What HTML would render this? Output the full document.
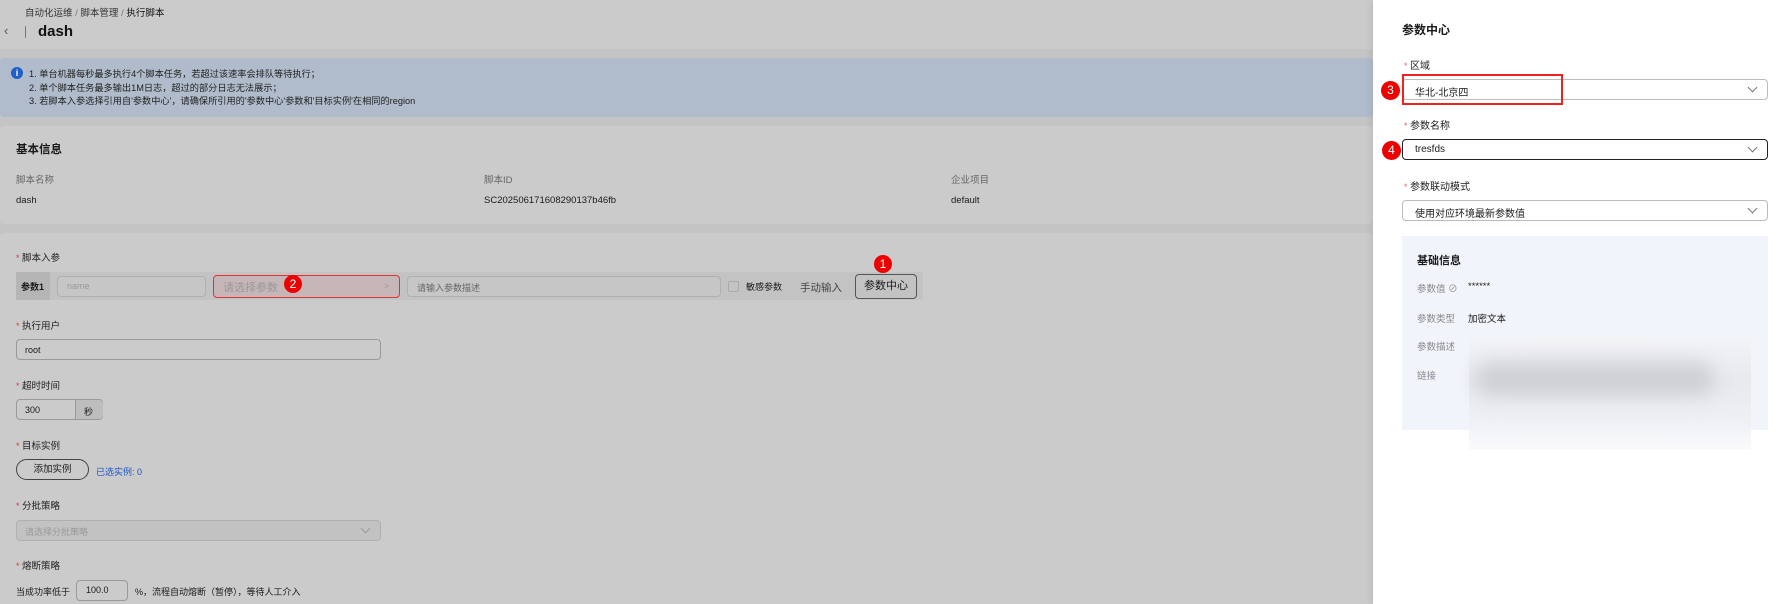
<!DOCTYPE html>
<html><head><meta charset="utf-8"><style>
*{margin:0;padding:0;box-sizing:border-box}
html,body{width:1778px;height:604px;overflow:hidden}
body{background:#c4c4c4;font-family:"Liberation Sans","Noto Sans CJK SC",sans-serif;font-size:9.5px;color:#1a1a1a;position:relative}
.a{position:absolute;white-space:nowrap}
.box{position:absolute}
.lbl{position:absolute;font-size:9.5px;color:#222;white-space:nowrap}
.lbl:before{content:"* ";color:#c44;font-size:9px}
.in{position:absolute;border:1px solid #9a9a9a;border-radius:4px;background:#cbcbcb}
.chev{position:absolute;width:7px;height:7px;border-right:1px solid #777;border-bottom:1px solid #777;transform:rotate(45deg)}
.badge{position:absolute;width:18px;height:18px;border-radius:50%;background:#e00;color:#fff;font-size:12px;text-align:center;line-height:18px}
.pl{position:absolute;font-size:10px;color:#222;white-space:nowrap}
.pl:before{content:"* ";color:#d66;font-size:9px}
.ps{position:absolute;left:1402px;width:366px;height:21px;border:1px solid #bbb;border-radius:4px;background:#fff;font-size:10px;padding:4px 0 0 12px;white-space:nowrap}
</style></head><body>
<div class="box" style="left:0;top:0;width:1373px;height:49px;background:#cbcbcb"></div>
<div class="a" style="left:25px;top:5px;font-size:9.5px;color:#333">自动化运维 <span style="color:#777">/</span> 脚本管理 <span style="color:#777">/</span> <span style="color:#111">执行脚本</span></div>
<div class="a" style="left:4px;top:23px;font-size:13px;color:#555">&lsaquo;</div>
<div class="box" style="left:25px;top:26px;width:1px;height:12px;background:#777"></div>
<div class="a" style="left:38px;top:23px;font-size:15px;font-weight:bold;color:#111">dash</div>
<div class="box" style="left:0;top:58px;width:1373px;height:59px;background:#b0bccb;border-radius:4px"></div>
<div class="box" style="left:11px;top:67px;width:12px;height:12px;border-radius:50%;background:#1f5fc8;color:#fff;font-size:9px;text-align:center;line-height:12px;font-weight:bold">i</div>
<div class="a" style="left:29px;top:68px;font-size:9.2px;line-height:13.5px;color:#222">1. 单台机器每秒最多执行4个脚本任务，若超过该速率会排队等待执行；<br>2. 单个脚本任务最多输出1M日志，超过的部分日志无法展示；<br>3. 若脚本入参选择引用自'参数中心'，请确保所引用的'参数中心'参数和'目标实例'在相同的region</div>
<div class="box" style="left:0;top:126px;width:1373px;height:98px;background:#cbcbcb;border-radius:4px"></div>
<div class="a" style="left:16px;top:141px;font-size:11.5px;font-weight:bold">基本信息</div>
<div class="a" style="left:16px;top:172px;color:#666">脚本名称</div>
<div class="a" style="left:484px;top:172px;color:#666">脚本ID</div>
<div class="a" style="left:951px;top:172px;color:#666">企业项目</div>
<div class="a" style="left:16px;top:195px">dash</div>
<div class="a" style="left:484px;top:195px">SC202506171608290137b46fb</div>
<div class="a" style="left:951px;top:195px">default</div>
<div class="box" style="left:0;top:233px;width:1373px;height:371px;background:#cbcbcb;border-radius:4px 4px 0 0"></div>
<div class="lbl" style="left:16px;top:250px">脚本入参</div>
<div class="box" style="left:16px;top:272px;width:907px;height:28px;background:#c3c3c3"></div>
<div class="box" style="left:16px;top:272px;width:34px;height:28px;background:#b5b5b5"></div>
<div class="a" style="left:21px;top:280px;font-size:9px;font-weight:bold">参数1</div>
<div class="in" style="left:57px;top:276px;width:149px;height:21px;background:#c6c6c6;border-color:#b0b0b0"></div>
<div class="a" style="left:67px;top:281px;font-size:9px;color:#999">name</div>
<div class="in" style="left:213px;top:275px;width:187px;height:23px;background:#c7b6b8;border-color:#d33"></div>
<div class="a" style="left:223px;top:279px;font-size:11px;color:#999">请选择参数</div>
<div class="a" style="left:384px;top:281px;font-size:9px;color:#999">&gt;</div>
<div class="badge" style="left:284px;top:275px">2</div>
<div class="in" style="left:407px;top:276px;width:314px;height:21px;background:#c6c6c6;border-color:#b0b0b0"></div>
<div class="a" style="left:417px;top:281px;font-size:9px;color:#666">请输入参数描述</div>
<div class="box" style="left:728px;top:281px;width:11px;height:11px;border:1px solid #aaa;border-radius:2px"></div>
<div class="a" style="left:746px;top:280px;font-size:9px">敏感参数</div>
<div class="a" style="left:800px;top:280px;font-size:10.5px;color:#444">手动输入</div>
<div class="box" style="left:855px;top:274px;width:62px;height:25px;border:1px solid #555;border-radius:4px;font-size:11px;text-align:center;line-height:23px">参数中心</div>
<div class="badge" style="left:874px;top:255px">1</div>
<div class="lbl" style="left:16px;top:318px">执行用户</div>
<div class="in" style="left:16px;top:339px;width:365px;height:21px"></div>
<div class="a" style="left:25px;top:345px;font-size:9px">root</div>
<div class="lbl" style="left:16px;top:378px">超时时间</div>
<div class="in" style="left:16px;top:399px;width:87px;height:21px"></div>
<div class="box" style="left:75px;top:400px;width:28px;height:19px;background:#bdbdbd;border-left:1px solid #9a9a9a;border-radius:0 4px 4px 0"></div>
<div class="a" style="left:25px;top:405px;font-size:9px">300</div>
<div class="a" style="left:84px;top:405px;font-size:9px">秒</div>
<div class="lbl" style="left:16px;top:438px">目标实例</div>
<div class="box" style="left:16px;top:459px;width:73px;height:21px;border:1px solid #444;border-radius:11px;font-size:9.5px;text-align:center;line-height:19px">添加实例</div>
<div class="a" style="left:96px;top:465px;font-size:9px;color:#1a55c8">已选实例: 0</div>
<div class="lbl" style="left:16px;top:498px">分批策略</div>
<div class="in" style="left:16px;top:520px;width:365px;height:21px;background:#c2c2c2;border-color:#b0b0b0"></div>
<div class="a" style="left:25px;top:525px;font-size:9px;color:#999">请选择分批策略</div>
<div class="chev" style="left:362px;top:525px;border-color:#999"></div>
<div class="lbl" style="left:16px;top:558px">熔断策略</div>
<div class="a" style="left:16px;top:585px;font-size:9px">当成功率低于</div>
<div class="in" style="left:76px;top:580px;width:52px;height:21px"></div>
<div class="a" style="left:86px;top:585px;font-size:9px">100.0</div>
<div class="a" style="left:135px;top:585px;font-size:9px">%，流程自动熔断（暂停），等待人工介入</div>

<div class="box" style="left:1373px;top:0;width:405px;height:604px;background:#fff;box-shadow:-2px 0 6px rgba(0,0,0,.08)"></div>
<div class="a" style="left:1402px;top:21px;font-size:12px;font-weight:bold">参数中心</div>
<div class="pl" style="left:1404px;top:57px">区域</div>
<div class="ps" style="top:79px">华北-北京四</div>
<div class="chev" style="left:1749px;top:84px"></div>
<div class="box" style="left:1402px;top:74px;width:161px;height:31px;border:2px solid #e22"></div>
<div class="badge" style="left:1381px;top:81px;width:19px;height:19px">3</div>
<div class="pl" style="left:1404px;top:117px">参数名称</div>
<div class="ps" style="top:139px;border-color:#222">tresfds</div>
<div class="chev" style="left:1749px;top:144px"></div>
<div class="badge" style="left:1382px;top:141px;width:19px;height:19px">4</div>
<div class="pl" style="left:1404px;top:178px">参数联动模式</div>
<div class="ps" style="top:200px">使用对应环境最新参数值</div>
<div class="chev" style="left:1749px;top:205px"></div>
<div class="box" style="left:1402px;top:236px;width:366px;height:194px;background:#f1f4fb"></div>
<div class="a" style="left:1417px;top:252px;font-size:11px;font-weight:bold">基础信息</div>
<div class="a" style="left:1417px;top:281px;font-size:9.5px;color:#888">参数值 ⊘</div>
<div class="a" style="left:1468px;top:281px;font-size:9.5px">******</div>
<div class="a" style="left:1417px;top:311px;font-size:9.5px;color:#888">参数类型</div>
<div class="a" style="left:1468px;top:311px;font-size:9.5px">加密文本</div>
<div class="a" style="left:1417px;top:339px;font-size:9.5px;color:#888">参数描述</div>
<div class="a" style="left:1417px;top:368px;font-size:9.5px;color:#888">链接</div>
<div class="box" style="left:1469px;top:335px;width:282px;height:115px;background:linear-gradient(180deg,#f3f4f7,#e8e9ed 40%,#eef0f4 75%,#fbfbfd)"></div>
<div class="box" style="left:1475px;top:362px;width:240px;height:34px;border-radius:17px;background:#cfd0d5;filter:blur(9px)"></div>
</body></html>
